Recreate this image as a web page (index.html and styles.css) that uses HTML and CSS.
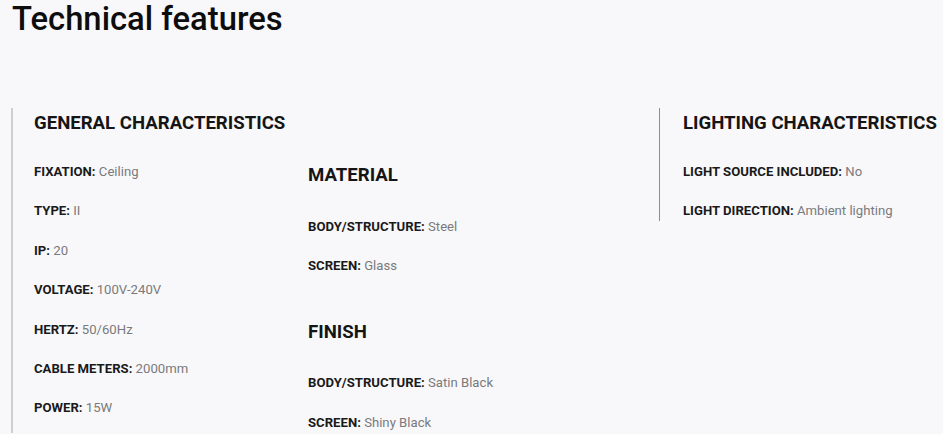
FILE: index.html
```html
<!DOCTYPE html>
<html lang="en">
<head>
<meta charset="utf-8">
<title>Technical features</title>
<link rel="stylesheet" href="styles.css">
</head>
<body>
<h1 class="title">Technical features</h1>
<div class="specs">
  <section class="col col-general">
    <h3 class="heading">GENERAL CHARACTERISTICS</h3>
    <ul class="list">
      <li class="item"><b>FIXATION:</b> Ceiling</li>
      <li class="item"><b>TYPE:</b> II</li>
      <li class="item"><b>IP:</b> 20</li>
      <li class="item"><b>VOLTAGE:</b> 100V-240V</li>
      <li class="item"><b>HERTZ:</b> 50/60Hz</li>
      <li class="item"><b>CABLE METERS:</b> 2000mm</li>
      <li class="item"><b>POWER:</b> 15W</li>
    </ul>
  </section>
  <section class="col col-material">
    <div class="group">
      <h3 class="heading">MATERIAL</h3>
      <ul class="list">
        <li class="item"><b>BODY/STRUCTURE:</b> Steel</li>
        <li class="item"><b>SCREEN:</b> Glass</li>
      </ul>
    </div>
    <div class="group group-finish">
      <h3 class="heading">FINISH</h3>
      <ul class="list">
        <li class="item"><b>BODY/STRUCTURE:</b> Satin Black</li>
        <li class="item"><b>SCREEN:</b> Shiny Black</li>
      </ul>
    </div>
  </section>
  <section class="col col-lighting">
    <h3 class="heading">LIGHTING CHARACTERISTICS</h3>
    <ul class="list">
      <li class="item"><b>LIGHT SOURCE INCLUDED:</b> No</li>
      <li class="item"><b>LIGHT DIRECTION:</b> Ambient lighting</li>
    </ul>
  </section>
</div>
</body>
</html>
```
FILE: styles.css
```css
html, body {
  margin: 0;
  padding: 0;
  background: #f8f8fa;
}
body {
  font-family: Roboto, "Liberation Sans", Arial, sans-serif;
  color: #111;
  overflow: hidden;
}
.title {
  margin: 0;
  padding: 0 0 0 12px;
  font-size: 32.8px;
  font-weight: 500;
  line-height: 38px;
  color: #0d0d0d;
}
.specs {
  margin-top: 70px;
  display: grid;
  grid-template-columns: 297px 351px 1fr;
  padding-left: 11px;
}
.col {
  padding-top: 4px;
}
.col-general {
  border-left: 2px solid #cfcfd2;
  padding-left: 21px;
}
.col-material {
  padding-top: 56px;
}
.col-lighting {
  border-left: 1px solid #8e8e90;
  padding-left: 23px;
  align-self: start;
}
.heading {
  margin: 0;
  font-size: 18.6px;
  font-weight: 700;
  line-height: 22px;
  color: #151515;
  white-space: nowrap;
}
.list {
  list-style: none;
  margin: 28px 0 0;
  padding: 0;
  display: flex;
  flex-direction: column;
  gap: 19.4px;
}
.col-material .list {
  margin-top: 31px;
}
.group-finish {
  margin-top: 45px;
}
.col-material .group-finish .list {
  margin-top: 30px;
}
.item {
  font-size: 13.15px;
  line-height: 20px;
  color: #7a7a7c;
  white-space: nowrap;
}
.item b {
  color: #1a1a1a;
  font-weight: 700;
}
```
